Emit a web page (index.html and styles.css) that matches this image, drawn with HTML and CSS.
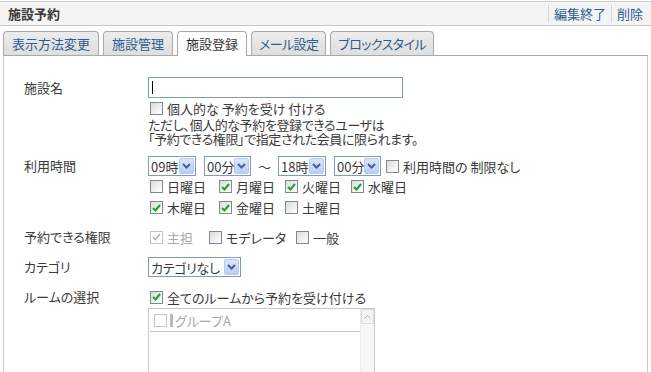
FILE: index.html
```html
<!DOCTYPE html>
<html lang="ja">

<head>
    <meta charset="UTF-8">
    <title>施設予約</title>
    <link rel="stylesheet" href="styles.css">
</head>

<body>
    <div class="head">
        <span class="head-title">施設予約</span>
        <div class="head-links">
            <a href="#">編集終了</a>
            <a href="#">削除</a>
        </div>
    </div>

    <ul class="tabs">
        <li class="tab">表示方法変更</li>
        <li class="tab">施設管理</li>
        <li class="tab active">施設登録</li>
        <li class="tab kana">メール設定</li>
        <li class="tab kana">ブロックスタイル</li>
    </ul>

    <div class="panel">
        <div class="row">
            <div class="label label-tall">施設名</div>
            <div class="field">
                <div class="textbox"><span class="caret"></span></div>
                <div class="check line"><span class="cb"></span>個人的な 予約を受け 付ける</div>
                <p class="note">ただし、個人的な予約を登録できるユーザは<br>「予約できる権限」で指定された会員に限られます。</p>
            </div>
        </div>

        <div class="row row-time">
            <div class="label">利用時間</div>
            <div class="field">
                <div class="time-line">
                    <div class="sel sel-hour"><span class="sel-text">09時</span><span class="sel-btn"><svg width="9" height="6" viewBox="0 0 9 6"><path d="M1 1l3.5 3.5L8 1" fill="none" stroke="#4d6185" stroke-width="2"/></svg></span></div>
                    <div class="sel sel-min"><span class="sel-text">00分</span><span class="sel-btn"><svg width="9" height="6" viewBox="0 0 9 6"><path d="M1 1l3.5 3.5L8 1" fill="none" stroke="#4d6185" stroke-width="2"/></svg></span></div>
                    <span class="tilde">～</span>
                    <div class="sel sel-hour"><span class="sel-text">18時</span><span class="sel-btn"><svg width="9" height="6" viewBox="0 0 9 6"><path d="M1 1l3.5 3.5L8 1" fill="none" stroke="#4d6185" stroke-width="2"/></svg></span></div>
                    <div class="sel sel-min"><span class="sel-text">00分</span><span class="sel-btn"><svg width="9" height="6" viewBox="0 0 9 6"><path d="M1 1l3.5 3.5L8 1" fill="none" stroke="#4d6185" stroke-width="2"/></svg></span></div>
                    <div class="check nolimit"><span class="cb"></span>利用時間の 制限なし</div>
                </div>
                <div class="days">
                    <div class="check"><span class="cb"></span>日曜日</div>
                    <div class="check"><span class="cb on"><svg width="9" height="8" viewBox="0 0 9 8"><path d="M1 4l2.5 2.5L8 1" fill="none" stroke="#21a121" stroke-width="2"/></svg></span>月曜日</div>
                    <div class="check"><span class="cb on"><svg width="9" height="8" viewBox="0 0 9 8"><path d="M1 4l2.5 2.5L8 1" fill="none" stroke="#21a121" stroke-width="2"/></svg></span>火曜日</div>
                    <div class="check"><span class="cb on"><svg width="9" height="8" viewBox="0 0 9 8"><path d="M1 4l2.5 2.5L8 1" fill="none" stroke="#21a121" stroke-width="2"/></svg></span>水曜日</div>
                    <div class="check"><span class="cb on"><svg width="9" height="8" viewBox="0 0 9 8"><path d="M1 4l2.5 2.5L8 1" fill="none" stroke="#21a121" stroke-width="2"/></svg></span>木曜日</div>
                    <div class="check"><span class="cb on"><svg width="9" height="8" viewBox="0 0 9 8"><path d="M1 4l2.5 2.5L8 1" fill="none" stroke="#21a121" stroke-width="2"/></svg></span>金曜日</div>
                    <div class="check"><span class="cb"></span>土曜日</div>
                </div>
            </div>
        </div>

        <div class="row row-auth">
            <div class="label">予約できる権限</div>
            <div class="field">
                <div class="auth-line">
                    <div class="check disabled auth-main"><span class="cb off"><svg width="9" height="8" viewBox="0 0 9 8"><path d="M1 4l2.5 2.5L8 1" fill="none" stroke="#b0b0b0" stroke-width="1.6"/></svg></span>主担</div>
                    <div class="check auth-mod"><span class="cb"></span>モデレータ</div>
                    <div class="check"><span class="cb"></span>一般</div>
                </div>
            </div>
        </div>

        <div class="row row-cat">
            <div class="label">カテゴリ</div>
            <div class="field">
                <div class="sel sel-cat"><span class="sel-text">カテゴリなし</span><span class="sel-btn"><svg width="9" height="6" viewBox="0 0 9 6"><path d="M1 1l3.5 3.5L8 1" fill="none" stroke="#4d6185" stroke-width="2"/></svg></span></div>
            </div>
        </div>

        <div class="row row-room">
            <div class="label">ルームの選択</div>
            <div class="field">
                <div class="check line"><span class="cb on"><svg width="9" height="8" viewBox="0 0 9 8"><path d="M1 4l2.5 2.5L8 1" fill="none" stroke="#21a121" stroke-width="2"/></svg></span>全てのルームから予約を受け付ける</div>
                <div class="listbox">
                    <div class="list-items">
                        <div class="list-item"><span class="cb off"></span><span class="group-bar"></span>グループA</div>
                    </div>
                    <div class="scroll">
                        <span class="scroll-up"><svg width="7" height="4" viewBox="0 0 7 4"><path d="M0.5 3.5L3.5 0.5L6.5 3.5" fill="none" stroke="#a8b0c0" stroke-width="1"/></svg></span>
                    </div>
                </div>
            </div>
        </div>
    </div>
</body>

</html>
```

FILE: styles.css
```css
body {
    margin: 0;
    font-family: "Noto Sans CJK JP", "Liberation Sans", sans-serif;
    font-size: 13px;
    font-feature-settings: "palt";
    color: #3a3a3a;
    background-color: #fff;
}

/* header bar */
.head {
    margin-top: 1px;
    height: 25px;
    box-sizing: border-box;
    border-top: 1px solid #d0d0d0;
    border-bottom: 1px solid #c8c8c8;
    background-color: #f4f4f4;
    display: flex;
    align-items: center;
    justify-content: space-between;
    padding: 0 0 0 8px;
}

.head-title {
    font-weight: bold;
    color: #3a3a3a;
}

.head-links {
    display: flex;
    align-items: center;
    height: 100%;
}

.head-links a {
    color: #2d5c91;
    text-decoration: none;
    border-left: 1px solid #d4d4d4;
    padding: 0 5px 0 5px;
    line-height: 18px;
}

.head-links a:last-child {
    padding-right: 8px;
}

/* tabs */
.tabs {
    list-style: none;
    margin: 5px 3px 0;
    padding: 0;
    display: flex;
    gap: 4px;
    border-bottom: 1px solid #a8a8a8;
}

.tab {
    height: 24px;
    box-sizing: border-box;
    padding: 0 8px;
    line-height: 23px;
    border: 1px solid #a8a8a8;
    border-bottom: none;
    border-radius: 4px 4px 0 0;
    background: linear-gradient(#ececec, #dedede);
    color: #2d5c91;
}

.tab.kana {
    letter-spacing: -0.6px;
    padding: 0 7px;
}

.tab.active {
    background: #fff;
    color: #333;
    height: 25px;
    margin-bottom: -1px;
}

/* panel */
.panel {
    margin: 0 3px;
    border-left: 1px solid #c8c8c8;
    border-right: 1px solid #c8c8c8;
    padding: 21px 0 40px 20px;
}

.row {
    display: flex;
}

.label {
    width: 124px;
    flex-shrink: 0;
    line-height: 20px;
}

.label-tall {
    line-height: 21px;
}

.field {
    flex: 1;
}

.row-time {
    margin-top: 10px;
}

.row-auth {
    margin-top: 9px;
}

.row-cat {
    margin-top: 10px;
}

.row-room {
    margin-top: 10px;
}

/* inputs */
.textbox {
    width: 255px;
    height: 21px;
    box-sizing: border-box;
    border: 1px solid #7f9db9;
    display: flex;
    align-items: center;
    padding-left: 3px;
}

.caret {
    width: 1px;
    height: 13px;
    background-color: #000;
}

.check {
    display: flex;
    align-items: center;
    height: 20px;
}

.cb {
    width: 13px;
    height: 13px;
    box-sizing: border-box;
    border: 1px solid #7c8b9b;
    background: linear-gradient(135deg, #dcdcd6, #fff);
    margin: 0 4px 0 2px;
    display: flex;
    align-items: center;
    justify-content: center;
    flex-shrink: 0;
}

.cb.off {
    border-color: #c4c4c4;
    background: #fff;
}

.check.disabled {
    color: #a8a8a8;
}

.note {
    margin: 0;
    line-height: 14px;
    letter-spacing: -0.4px;
}

.time-line {
    display: flex;
    align-items: center;
    height: 20px;
}

.sel {
    display: flex;
    align-items: center;
    height: 20px;
    box-sizing: border-box;
    border: 1px solid #7f9db9;
    background-color: #fff;
}

.sel-text {
    flex: 1;
    padding-left: 2px;
    white-space: nowrap;
}

.sel-btn {
    width: 15px;
    height: 16px;
    margin-right: 1px;
    box-sizing: border-box;
    border: 1px solid #b9caf0;
    border-radius: 2px;
    background: linear-gradient(#dbe6fd, #b8cdf8);
    display: flex;
    align-items: center;
    justify-content: center;
    flex-shrink: 0;
}

.sel-hour {
    width: 48px;
}

.sel-min {
    width: 47px;
}

.sel + .sel {
    margin-left: 8px;
}

.tilde {
    width: 27px;
    text-align: center;
}

.nolimit .cb {
    margin-left: 5px;
}

.days {
    display: grid;
    grid-template-columns: 69px 66px 66px 66px;
    grid-auto-rows: 21px;
}

.days .check {
    height: 21px;
}

.auth-line {
    display: flex;
}

.auth-main {
    width: 59px;
}

.auth-mod {
    width: 87px;
}

.sel-cat {
    display: inline-flex;
}

.sel-cat .sel-text {
    padding-right: 4px;
    letter-spacing: -0.3px;
}

/* room list */
.listbox {
    margin-top: 1px;
    width: 227px;
    height: 80px;
    box-sizing: border-box;
    border: 1px solid #c8c8c8;
    display: flex;
}

.list-items {
    flex: 1;
    padding: 0 0 0 1px;
}

.list-item {
    display: flex;
    align-items: center;
    height: 22px;
    border-bottom: 1px solid #c8c8c8;
    color: #a8a8a8;
    padding-left: 3px;
}

.list-item .cb {
    margin: 0 3px 0 1px;
}

.group-bar {
    width: 3px;
    height: 13px;
    background-color: #b8b8b8;
    margin-right: 2px;
}

.scroll {
    width: 13px;
    background-color: #f7f7f7;
    border-left: 1px solid #ececec;
}

.scroll-up {
    display: flex;
    align-items: center;
    justify-content: center;
    height: 15px;
    box-sizing: border-box;
    border: 1px solid #dcdcdc;
    background-color: #f4f4f4;
}
```
